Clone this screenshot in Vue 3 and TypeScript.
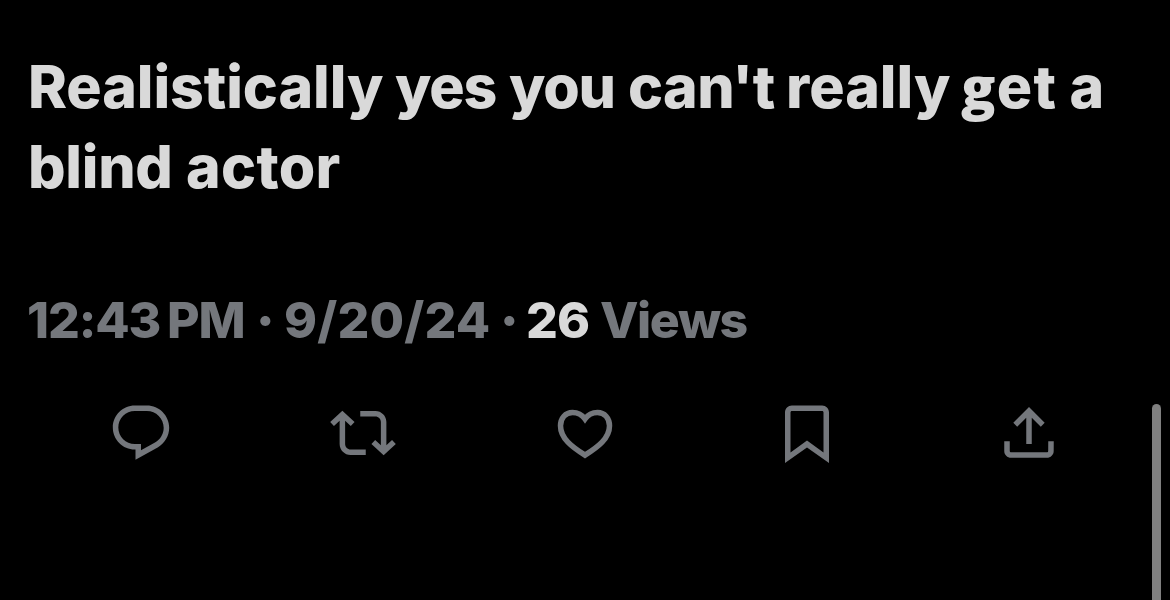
<script setup lang="ts">
interface Word {
  text: string
  slot: number
  spacing: number
  tone?: 'strong' | 'dot'
}

// slot: advance to the next word in px; spacing: tracking in px
const lines: Word[][] = [
  [
    { text: 'Realistically', slot: 367, spacing: -0.1 },
    { text: 'yes', slot: 114, spacing: -1.2 },
    { text: 'you', slot: 119, spacing: -1.2 },
    { text: "can't", slot: 158, spacing: -0.6 },
    { text: 'really', slot: 175, spacing: 0 },
    { text: 'get', slot: 108.5, spacing: 1.2 },
    { text: 'a', slot: 40, spacing: 0 },
  ],
  [
    { text: 'blind', slot: 158, spacing: -0.3 },
    { text: 'actor', slot: 160, spacing: 0.3 },
  ],
]

const meta: Word[] = [
  { text: '12:43', slot: 140, spacing: -1.1 },
  { text: 'PM', slot: 89, spacing: -1 },
  { text: '·', slot: 28, spacing: 0, tone: 'dot' },
  { text: '9/20/24', slot: 216, spacing: 0.2 },
  { text: '·', slot: 26, spacing: 0, tone: 'dot' },
  { text: '26', slot: 74, spacing: -1, tone: 'strong' },
  { text: 'Views', slot: 150, spacing: -1.4 },
]

function glyphs(text: string): string[] {
  return text.split(/(g)/).filter(Boolean)
}
</script>

<template>
  <div class="screen">
    <main class="post">
      <div class="body">
        <p v-for="(line, i) in lines" :key="i" class="line">
          <span
            v-for="word in line"
            :key="word.text"
            class="word"
            :style="{ width: word.slot + 'px', letterSpacing: word.spacing + 'px' }"
          ><span v-for="(part, k) in glyphs(word.text)" :key="k" :class="{ gee: part === 'g' }">{{ part }}</span></span>
        </p>
      </div>
      <p class="meta">
        <span
          v-for="(word, i) in meta"
          :key="i"
          class="word"
          :class="word.tone"
          :style="{ width: word.slot + 'px', letterSpacing: word.spacing + 'px' }"
        >{{ word.text }}</span>
      </p>
      <div class="actions">
        <button type="button" aria-label="Reply">
          <svg viewBox="0 0 24 24"><path d="M1.751 10c0-4.42 3.584-8 8.005-8h4.366c4.49 0 8.129 3.64 8.129 8.13 0 2.96-1.607 5.68-4.196 7.11l-8.054 4.46v-3.69h-.067c-4.49.1-8.183-3.51-8.183-8.01zm8.005-6c-3.317 0-6.005 2.69-6.005 6 0 3.37 2.77 6.08 6.138 6.01l.351-.01h1.761v2.3l5.087-2.81c1.951-1.08 3.163-3.13 3.163-5.36 0-3.39-2.744-6.13-6.129-6.13H9.756z" /></svg>
        </button>
        <button type="button" aria-label="Repost">
          <svg viewBox="0 0 24 24"><path d="M4.5 3.88l4.432 4.14-1.364 1.46L5.5 7.55V16c0 1.1.896 2 2 2H13v2H7.5c-2.209 0-4-1.79-4-4V7.55L1.432 9.48.068 8.02 4.5 3.88zM16.5 6H11V4h5.5c2.209 0 4 1.79 4 4v8.45l2.068-1.93 1.364 1.46-4.432 4.14-4.432-4.14 1.364-1.46 2.068 1.93V8c0-1.1-.896-2-2-2z" /></svg>
        </button>
        <button type="button" aria-label="Like">
          <svg viewBox="12 9.5 66 66"><path class="outline" d="M45 28.5C41.500 23.500 36.500 22 32.500 22C25.500 22 20.500 27.500 20.500 35.300C20.500 48 32 56.500 45 64.700C58 56.500 69.500 48 69.500 35.300C69.500 27.500 64.500 22 57.500 22C53.500 22 48.500 23.500 45 28.500Z" /></svg>
        </button>
        <button type="button" aria-label="Bookmark">
          <svg viewBox="0 0 24 24"><path d="M4 4.500C4 3.120 5.119 2 6.500 2h11C18.881 2 20 3.120 20 4.500v18.440l-8-5.710-8 5.710V4.500zM6.500 4c-.276 0-.5.22-.5.5v14.560l6-4.290 6 4.290V4.500c0-.28-.224-.5-.5-.5h-11z" /></svg>
        </button>
        <button type="button" aria-label="Share">
          <svg viewBox="0 0 24 24"><path d="M12 2.590l5.700 5.700-1.410 1.420L13 6.410V16h-2V6.410l-3.300 3.300-1.410-1.420L12 2.590zM21 15l-.02 3.510c0 1.380-1.120 2.490-2.500 2.490H5.500C4.110 21 3 19.880 3 18.500V15h2v3.500c0 .28.22.5.5.5h12.980c.28 0 .5-.22.5-.5L19 15h2z" /></svg>
        </button>
      </div>
    </main>
    <div class="scrollbar"></div>
  </div>
</template>

<style>
body {
  margin: 0;
  background: #000;
}
</style>

<style scoped>
.screen {
  display: flex;
  width: 1170px;
  height: 600px;
  overflow: hidden;
  background: #000;
  font-family: Inter, "Liberation Sans", sans-serif;
}
.post {
  width: 1152px;
  flex: none;
  padding-top: 47px;
  box-sizing: border-box;
}
p {
  margin: 0;
}
.line,
.meta {
  display: flex;
  white-space: nowrap;
}
.word {
  display: block;
  flex: none;
}
.line {
  height: 80px;
  padding-left: 28px;
  font-size: 59px;
  line-height: 80px;
  font-weight: 800;
  color: #d9d9d9;
}
.gee {
  font-family: "Open Sans", sans-serif;
  font-size: 57px;
  line-height: 0;
}
.meta {
  height: 70px;
  margin-top: 78px;
  padding-left: 27px;
  font-size: 50px;
  line-height: 70px;
  font-weight: 800;
  color: #74777c;
}
.strong {
  color: #d9d9d9;
}
.dot {
  font-weight: 900;
}
.actions {
  display: grid;
  grid-template-columns: repeat(5, 222px);
  justify-items: center;
  margin: 44.5px 0 0 30px;
}
button {
  display: block;
  width: 66px;
  height: 66px;
  padding: 0;
  border: 0;
  background: none;
}
svg {
  display: block;
  width: 66px;
  height: 66px;
  fill: #74777c;
}
.outline {
  fill: none;
  stroke: #74777c;
  stroke-width: 5.5;
}
.scrollbar {
  flex: none;
  width: 9px;
  height: 230px;
  margin-top: 404px;
  border-radius: 4.5px;
  background: #808080;
}
</style>
